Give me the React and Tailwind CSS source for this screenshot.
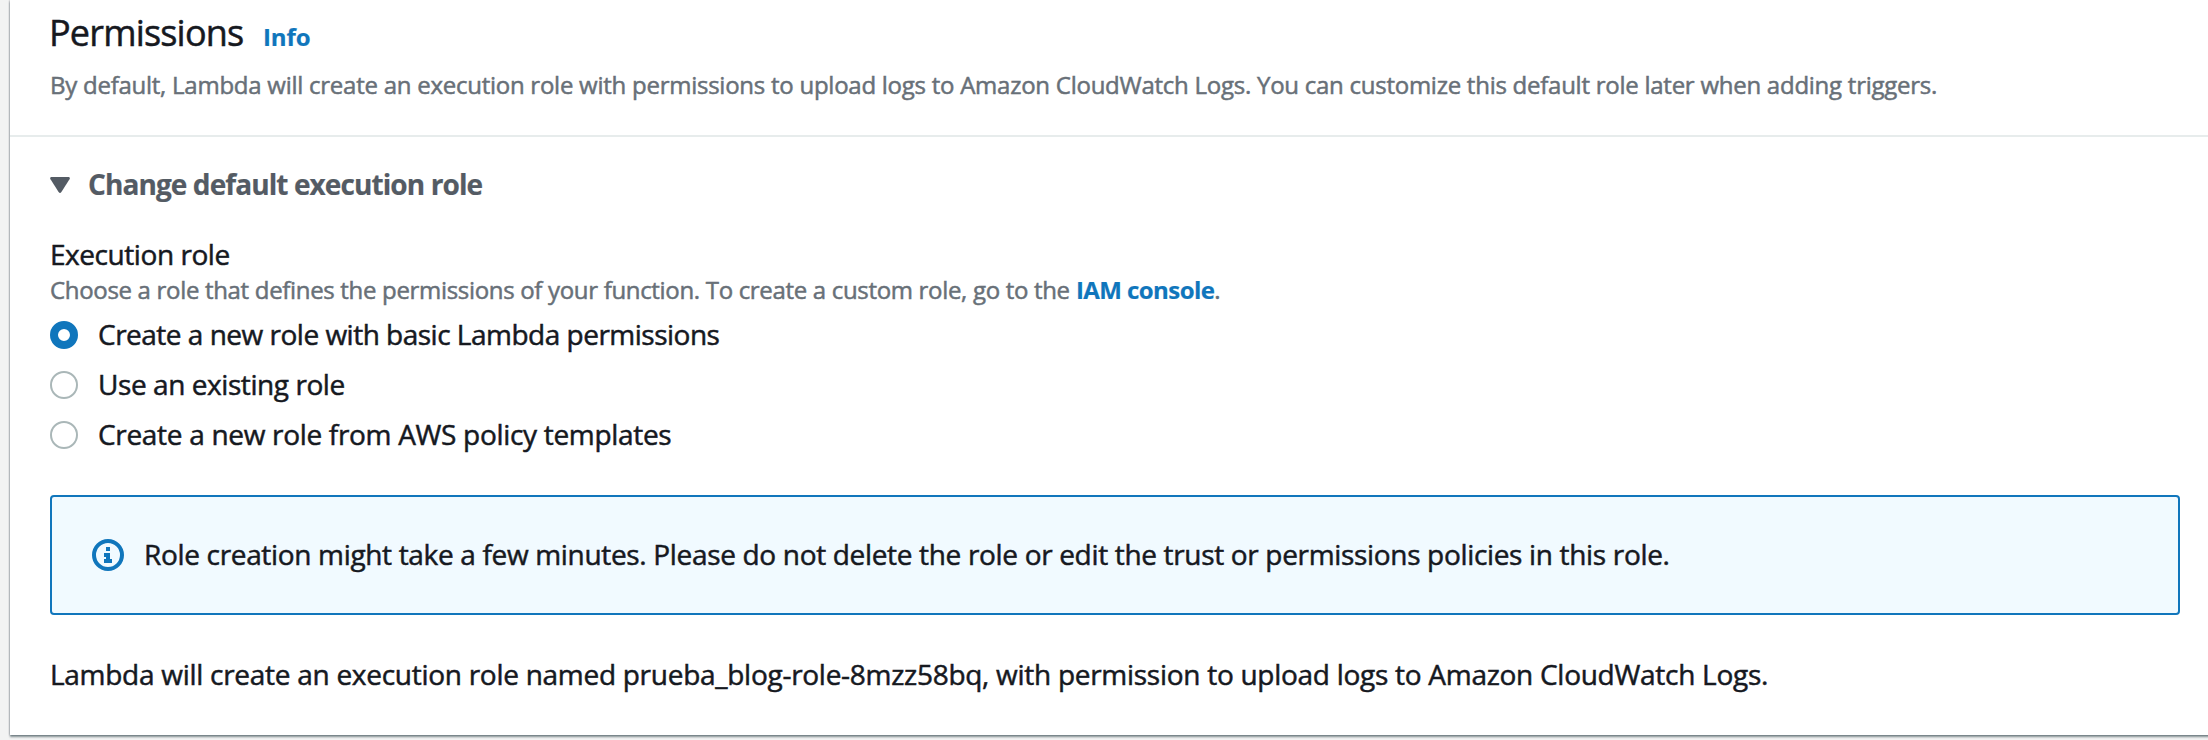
function RadioOption({ label, checked, tracking }) {
  return (
    <label className="flex h-[50px] items-center">
      <span
        className={
          checked
            ? "size-7 rounded-full border-8 border-[#1076bc] bg-white"
            : "size-7 rounded-full border-2 border-[#aab7b8] bg-white"
        }
      />
      <span className={`ml-5 pb-0.5 leading-[46px] ${tracking}`}>{label}</span>
    </label>
  );
}

function InfoIcon() {
  return (
    <svg className="size-8 shrink-0" viewBox="0 0 32 32" fill="none">
      <circle cx="16" cy="16" r="14" stroke="#1076bc" strokeWidth="4" />
      <path
        d="M14 8h4v4h-4zM12 14h6v6h2v4h-8v-4h2v-2h-2z"
        fill="#1076bc"
        shapeRendering="crispEdges"
      />
    </svg>
  );
}

export default function App() {
  return (
    <div className="h-[740px] w-[2208px] overflow-hidden bg-[#f2f3f3] pl-[10px] font-['Open_Sans','Noto_Sans',sans-serif] text-[28px] text-[#16191f] [-webkit-text-stroke:0.5px]">
      <main className="h-[735px] w-[2240px] whitespace-nowrap bg-white shadow-[0_2px_2px_0_rgba(0,28,36,0.45),0_0_2px_0_rgba(0,7,32,0.4)]">
        <header className="h-[137px] border-b-2 border-[#e7ecec] pl-10 pt-[11px]">
          <div className="flex h-11 items-baseline leading-[44px]">
            <h2 className="-ml-px w-[214px] text-[36px] tracking-[-0.813px]">Permissions</h2>
            <a className="text-[24px] font-bold tracking-[-0.1px] text-[#1076bc] [-webkit-text-stroke:0.2px]">Info</a>
          </div>
          <p className="mt-3 text-[24px] leading-9 tracking-[-0.254px] text-[#687078]">
            By default, Lambda will create an execution role with permissions to upload logs to Amazon CloudWatch Logs. You can customize this default role later when adding triggers.
          </p>
        </header>

        <section className="pl-10 pt-[27px]">
          <div className="flex h-10 items-center text-[#545b64]">
            <svg className="mt-0.5 h-4 w-5" viewBox="0 0 20 16" fill="currentColor">
              <path d="M1.2 0H18.8Q20.6.4 19.5 2.2L11.4 15Q10 17 8.6 15L.5 2.2Q-.6.4 1.2 0Z" />
            </svg>
            <h3 className="ml-[18px] font-bold leading-10 tracking-[-0.909px] [-webkit-text-stroke:0.2px]">
              Change default execution role
            </h3>
          </div>

          <div className="mt-[29px] leading-[42px] tracking-[-0.44px]">Execution role</div>
          <p className="flex text-[24px] leading-[30px] tracking-[-0.32px] text-[#687078]">
            <span className="w-[1026px]">
              Choose a role that defines the permissions of your function. To create a custom role, go to the
            </span>
            <a className="font-bold tracking-[-0.575px] text-[#1076bc] [-webkit-text-stroke:0.2px]">IAM console</a>.
          </p>

          <div className="mt-[5px]">
            <RadioOption checked label="Create a new role with basic Lambda permissions" tracking="tracking-[-0.5px]" />
            <RadioOption label="Use an existing role" tracking="tracking-[-0.426px]" />
            <RadioOption label="Create a new role from AWS policy templates" tracking="tracking-[-0.31px]" />
          </div>

          <div className="mt-[35px] flex h-[120px] w-[2130px] items-center rounded-[4px] border-2 border-[#1076bc] bg-[#f1faff] pl-10">
            <InfoIcon />
            <p className="ml-5 pb-0.5 leading-10 tracking-[-0.329px]">
              Role creation might take a few minutes. Please do not delete the role or edit the trust or permissions policies in this role.
            </p>
          </div>

          <p className="mt-[39px] leading-10 tracking-[-0.276px]">
            Lambda will create an execution role named prueba_blog-role-8mzz58bq, with permission to upload logs to Amazon CloudWatch Logs.
          </p>
        </section>
      </main>
    </div>
  );
}
